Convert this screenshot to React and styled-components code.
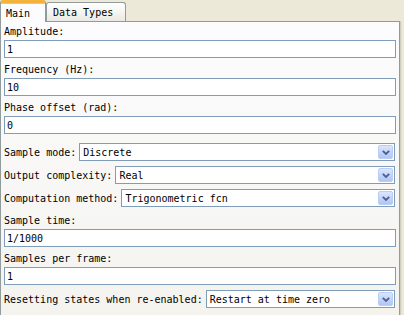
import React from 'react';
import styled, { createGlobalStyle } from 'styled-components';

const GlobalStyle = createGlobalStyle`
  html, body {
    margin: 0;
    padding: 0;
    background: #ece9d8;
    overflow: hidden;
  }
  body {
    font-family: "DejaVu Sans Mono", "Liberation Mono", monospace;
    font-size: 10px;
    color: #000;
  }
`;

const Dialog = styled.div`
  width: 404px;
  height: 315px;
  display: flex;
  flex-direction: column;
`;

const TabStrip = styled.div`
  display: flex;
  align-items: flex-end;
  height: 21px;
`;

const Tab = styled.div`
  position: relative;
  box-sizing: border-box;
  display: flex;
  align-items: center;
  width: ${(p) => p.$width}px;
  height: ${(p) => (p.$active ? 22 : 19)}px;
  margin-bottom: ${(p) => (p.$active ? -1 : 0)}px;
  padding-left: ${(p) => (p.$active ? 5 : 6)}px;
  padding-top: ${(p) => (p.$active ? 1 : 0)}px;
  border: 1px solid #919b9c;
  border-bottom: none;
  border-top: ${(p) => (p.$active ? '3px solid #f4b33c' : '1px solid #919b9c')};
  border-radius: 3px 3px 0 0;
  background: ${(p) =>
    p.$active ? '#fcfcfe' : 'linear-gradient(#ffffff, #f3f3ef 60%, #e9e8e1)'};
  z-index: ${(p) => (p.$active ? 2 : 1)};
  white-space: pre;
  box-shadow: ${(p) => (p.$active ? 'inset 0 1px 0 #ffc83c' : 'none')};
`;

const Panel = styled.div`
  box-sizing: border-box;
  width: 400px;
  flex: 1;
  border: 1px solid #919b9c;
  border-bottom: none;
  background: linear-gradient(#fcfcfe, #f4f3ee);
  box-shadow: 1px 0 0 #d0cebf, 2px 0 0 #e3e0d0;
  padding: 3px 3px 0 3px;
  display: flex;
  flex-direction: column;
  gap: 5px;
`;

const Field = styled.div`
  display: flex;
  flex-direction: column;
`;

const Label = styled.div`
  height: 14px;
  line-height: 14px;
  white-space: pre;
`;

const TextBox = styled.input`
  box-sizing: border-box;
  width: 392px;
  height: 18px;
  margin: 1px 0 0 0;
  padding: 0 2px;
  border: 1px solid #7f9db9;
  background: #fff;
  font: inherit;
  color: #000;
  outline: none;
`;

const SelectGroup = styled.div`
  display: flex;
  flex-direction: column;
  gap: 5px;
  margin: 4px 0 2px 0;
`;

const SelectRow = styled.div`
  display: flex;
  align-items: center;
  gap: 3px;
  white-space: pre;
`;

const Combo = styled.div`
  box-sizing: border-box;
  flex: 1;
  margin-right: 1px;
  height: 18px;
  display: flex;
  align-items: center;
  border: 1px solid #7f9db9;
  background: #fff;
  padding: 1px 1px 1px 3px;
`;

const ComboValue = styled.span`
  flex: 1;
  white-space: pre;
`;

const DropButton = styled.span`
  box-sizing: border-box;
  width: 15px;
  height: 14px;
  display: flex;
  align-items: center;
  justify-content: center;
  border: 1px solid #bacdf6;
  border-radius: 2px;
  background: linear-gradient(#dce6fd, #c3d4fb 50%, #b2c6f4);
`;

function Chevron() {
  return (
    <svg width="8" height="5" viewBox="0 0 8 5">
      <path d="M0.8 0.8 L4 4 L7.2 0.8" fill="none" stroke="#4d6185" strokeWidth="1.8" />
    </svg>
  );
}

function Select({ label, value }) {
  return (
    <SelectRow>
      <span>{label}</span>
      <Combo>
        <ComboValue>{value}</ComboValue>
        <DropButton>
          <Chevron />
        </DropButton>
      </Combo>
    </SelectRow>
  );
}

function TextField({ label, value }) {
  return (
    <Field>
      <Label>{label}</Label>
      <TextBox defaultValue={value} readOnly />
    </Field>
  );
}

export default function App() {
  return (
    <Dialog>
      <GlobalStyle />
      <TabStrip>
        <Tab $active $width={46}>Main</Tab>
        <Tab $width={80}>Data Types</Tab>
      </TabStrip>
      <Panel>
        <TextField label="Amplitude:" value="1" />
        <TextField label="Frequency (Hz):" value="10" />
        <TextField label="Phase offset (rad):" value="0" />
        <SelectGroup>
          <Select label="Sample mode:" value="Discrete" />
          <Select label="Output complexity:" value="Real" />
          <Select label="Computation method:" value="Trigonometric fcn" />
        </SelectGroup>
        <TextField label="Sample time:" value="1/1000" />
        <TextField label="Samples per frame:" value="1" />
        <Select label="Resetting states when re-enabled:" value="Restart at time zero" />
      </Panel>
    </Dialog>
  );
}
